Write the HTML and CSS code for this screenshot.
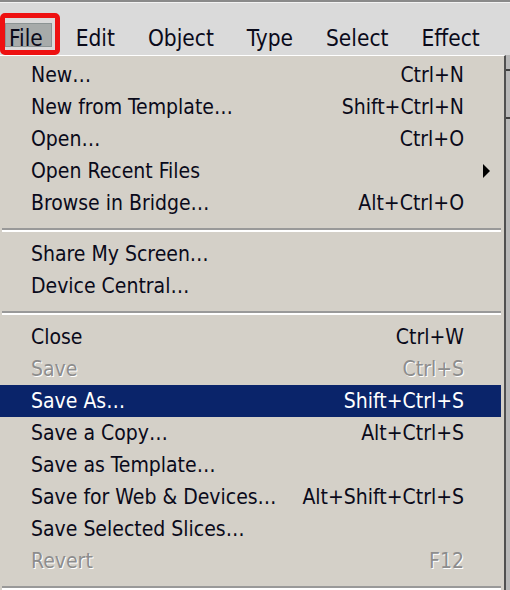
FILE: index.html
```html
<!DOCTYPE html>
<html>
<head>
<meta charset="utf-8">
<link rel="stylesheet" href="styles.css">
</head>
<body>
<div class="app">
  <nav class="menubar">
    <span class="mb-item mb-file"><span class="mb-hl">File</span></span>
    <span class="mb-item">Edit</span>
    <span class="mb-item">Object</span>
    <span class="mb-item">Type</span>
    <span class="mb-item">Select</span>
    <span class="mb-item">Effect</span>
  </nav>
  <div class="workspace">
    <div class="menu">
      <div class="row"><span class="label">New…</span><span class="key">Ctrl+N</span></div>
      <div class="row"><span class="label">New from Template…</span><span class="key">Shift+Ctrl+N</span></div>
      <div class="row"><span class="label">Open…</span><span class="key">Ctrl+O</span></div>
      <div class="row"><span class="label">Open Recent Files</span><span class="arrow"></span></div>
      <div class="row"><span class="label">Browse in Bridge…</span><span class="key">Alt+Ctrl+O</span></div>
      <div class="sep"></div>
      <div class="row"><span class="label">Share My Screen…</span></div>
      <div class="row"><span class="label">Device Central…</span></div>
      <div class="sep"></div>
      <div class="row"><span class="label">Close</span><span class="key">Ctrl+W</span></div>
      <div class="row disabled"><span class="label">Save</span><span class="key">Ctrl+S</span></div>
      <div class="row active"><span class="label">Save As…</span><span class="key">Shift+Ctrl+S</span></div>
      <div class="row"><span class="label">Save a Copy…</span><span class="key">Alt+Ctrl+S</span></div>
      <div class="row"><span class="label">Save as Template…</span></div>
      <div class="row"><span class="label">Save for Web &amp; Devices…</span><span class="key">Alt+Shift+Ctrl+S</span></div>
      <div class="row"><span class="label">Save Selected Slices…</span></div>
      <div class="row disabled"><span class="label">Revert</span><span class="key">F12</span></div>
      <div class="sep"></div>
    </div>
    <div class="side">
      <div class="side-line"></div>
      <div class="side-line second"></div>
    </div>
  </div>
</div>
</body>
</html>
```
FILE: styles.css
```css
html, body {
  margin: 0;
  padding: 0;
}
body {
  width: 510px;
  height: 590px;
  overflow: hidden;
  background: #d4d0c8;
  font-family: "DejaVu Sans Condensed", "DejaVu Sans", sans-serif;
  font-stretch: condensed;
  font-size: 21px;
  color: #0a0a1a;
}
.app {
  display: flex;
  flex-direction: column;
  height: 590px;
}
.menubar {
  flex: none;
  display: flex;
  align-items: flex-end;
  box-sizing: border-box;
  height: 55px;
  border-top: 2px solid #8a8a8a;
  box-shadow: inset 0 1px 0 #f2f2f2;
  background: #dadada;
  padding-left: 9px;
  padding-bottom: 5px;
  gap: 33px;
  font-size: 22.5px;
}
.mb-item {
  position: relative;
  line-height: 24px;
}
.mb-file::before {
  content: "";
  position: absolute;
  left: -9px;
  top: -13px;
  width: 50px;
  height: 32px;
  border: 5px solid #ee1111;
  border-radius: 5px;
}
.mb-file::after {
  content: "";
  position: absolute;
  left: -4px;
  top: -3px;
  width: 47px;
  height: 24px;
  box-sizing: border-box;
  background: #a7abaa;
  border: 1px solid #8c9494;
}
.mb-hl {
  position: relative;
  z-index: 1;
}
.workspace {
  flex: 1;
  display: flex;
  min-height: 0;
  background: #a9a9a9;
}
.menu {
  flex: none;
  width: 506px;
  box-sizing: border-box;
  background: #d4d0c8;
  border-top: 1px solid #ffffff;
  border-right: 2px solid #505050;
  padding: 3px 3px 0 0;
  display: flex;
  flex-direction: column;
}
.row {
  flex: none;
  display: flex;
  align-items: center;
  height: 32px;
  padding-left: 31px;
  padding-right: 37px;
  position: relative;
  white-space: nowrap;
}
.label {
  flex: 1;
}
.key {
  text-align: right;
}
.row.active {
  background: #0a246a;
  color: #ffffff;
}
.row.disabled {
  color: #8d8d8d;
  text-shadow: 1px 1px 0 #ffffff;
}
.arrow {
  width: 0;
  height: 0;
  border-left: 7px solid #000;
  border-top: 7px solid transparent;
  border-bottom: 7px solid transparent;
  margin-right: -26px;
}
.sep {
  height: 19px;
  flex: none;
  box-sizing: border-box;
  padding-top: 9px;
  margin-left: 2px;
}
.sep::before {
  content: "";
  display: block;
  height: 2px;
  background: #999999;
  border-bottom: 2px solid #ffffff;
}
.side {
  flex: 1;
  background: #b8b8b8;
  display: flex;
  flex-direction: column;
}
.side-line {
  height: 2px;
  background: #404040;
  margin-top: 14px;
}
.side-line.second {
  margin-top: 46px;
}
```
